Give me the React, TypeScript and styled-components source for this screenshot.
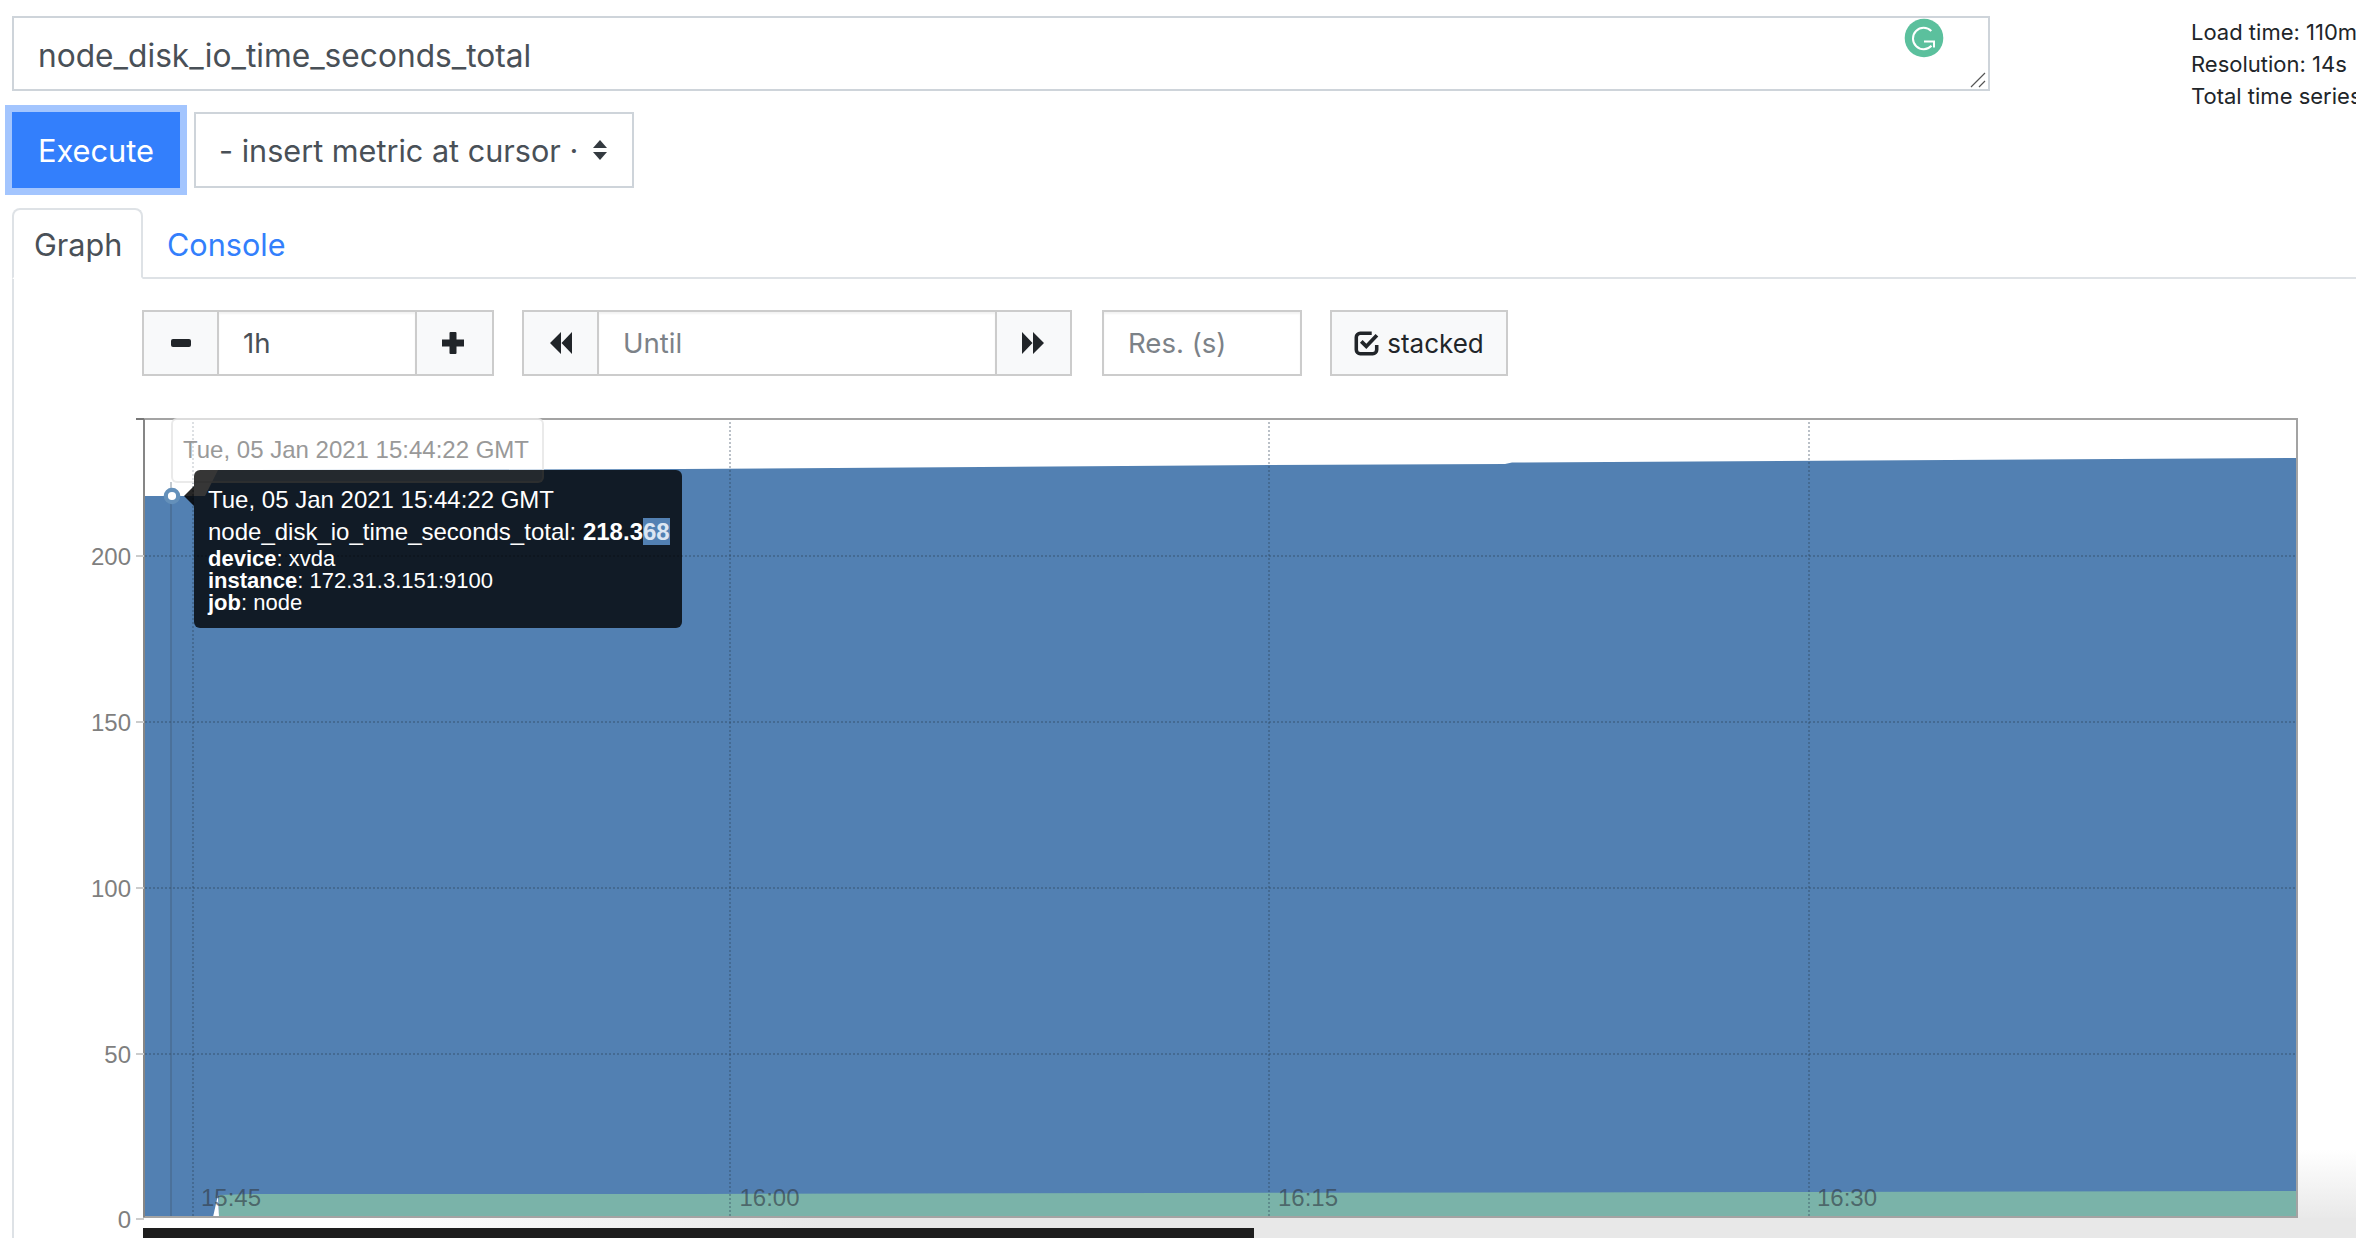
import styled, { createGlobalStyle } from 'styled-components'

const GlobalStyle = createGlobalStyle`
  html, body {
    margin: 0;
    padding: 0;
    background: #fff;
    overflow: hidden;
  }
  * {
    box-sizing: border-box;
  }
`

const sans = `Inter, "Liberation Sans", sans-serif`
const arial = `"Liberation Sans", Arial, sans-serif`

const Page = styled.div`
  position: relative;
  width: 2356px;
  height: 1238px;
  overflow: hidden;
  padding-top: 16px;
  font-family: ${sans};
  color: #212529;
`

const TopRow = styled.div`
  display: flex;
  padding-left: 12px;
`

const QueryColumn = styled.div`
  width: 1978px;
  flex: none;
`

const ExpressionWrap = styled.div`
  position: relative;
  height: 75px;
`

const Expression = styled.textarea`
  display: block;
  width: 100%;
  height: 100%;
  border: 2px solid #ced4da;
  padding: 19px 24px 0;
  font-family: ${sans};
  font-size: 31.7px;
  line-height: 38px;
  color: #495057;
  resize: none;
  outline: none;
  overflow: hidden;
`

const Grip = styled.svg`
  position: absolute;
  right: 4px;
  bottom: 3px;
  width: 16px;
  height: 16px;
`

const Grammarly = styled.svg`
  position: absolute;
  left: 1892px;
  top: 2px;
  width: 40px;
  height: 40px;
`

const Stats = styled.div`
  margin-left: 201px;
  font-size: 22px;
  line-height: 32px;
  white-space: nowrap;
`

const ActionRow = styled.div`
  display: flex;
  gap: 14px;
  margin-top: 21px;
`

const ExecuteButton = styled.button`
  width: 168px;
  height: 76px;
  border: none;
  background: #337ffc;
  color: #fff;
  font-family: ${sans};
  font-size: 30.8px;
  padding: 0;
  box-shadow: 0 0 0 7px rgba(51, 127, 252, 0.45);
`

const MetricSelect = styled.div`
  position: relative;
  width: 440px;
  height: 76px;
  border: 2px solid #ced4da;
  padding-left: 23px;
  display: flex;
  align-items: center;
  font-size: 30.6px;
  color: #495057;
  white-space: nowrap;
`

const SelectCaret = styled.svg`
  position: absolute;
  right: 24px;
  top: 26px;
  width: 16px;
  height: 20px;
`

const TabBar = styled.div`
  display: flex;
  align-items: flex-start;
  margin: 20px 0 0 12px;
  height: 71px;
  border-bottom: 2px solid #dee2e6;
`

const ActiveTab = styled.div`
  width: 131px;
  height: 71px;
  padding: 12px 0 0 20px;
  font-size: 30.6px;
  line-height: 46px;
  color: #495057;
  background: #fff;
  border: 2px solid #dee2e6;
  border-bottom-color: #fff;
  border-radius: 8px 8px 0 0;
`

const LinkTab = styled.div`
  padding: 14px 0 0 24px;
  font-size: 30.6px;
  line-height: 46px;
  color: #337ffc;
`

const Panel = styled.div`
  margin-left: 12px;
  height: 960px;
  padding-top: 31px;
  border-left: 2px solid #dee2e6;
`

const Controls = styled.div`
  display: flex;
  align-items: stretch;
  height: 66px;
  margin-left: 128px;
`

const Group = styled.div<{ $gap: number }>`
  display: flex;
  margin-right: ${({ $gap }) => $gap}px;
`

const AddonButton = styled.div<{ $width?: number; $first?: boolean; $shift?: number }>`
  width: ${({ $width }) => $width ?? 77}px;
  padding-right: ${({ $shift }) => $shift ?? 0}px;
  display: flex;
  align-items: center;
  justify-content: center;
  background: #f8f9fa;
  border: 2px solid #ccc;
  border-left-width: ${({ $first }) => ($first ? '2px' : '0')};
`

const ToolIcon = styled.svg`
  width: 24px;
  height: 24px;
  fill: #212529;
`

const FieldBox = styled.div<{ $width: number; $muted?: boolean; $alone?: boolean }>`
  width: ${({ $width }) => $width}px;
  display: flex;
  align-items: center;
  padding-left: 24px;
  border: 2px solid #ccc;
  border-left-width: ${({ $alone }) => ($alone ? '2px' : '0')};
  box-shadow: inset 0 2px 2px rgba(0, 0, 0, 0.05);
  background: #fff;
  font-size: 27.6px;
  color: ${({ $muted }) => ($muted ? '#7c8288' : '#495057')};
`

const StackedToggle = styled.div`
  width: 178px;
  display: flex;
  align-items: center;
  justify-content: center;
  gap: 8px;
  background: #f8f9fa;
  border: 2px solid #ccc;
  font-size: 26px;
  color: #212529;
`

const CheckIcon = styled.svg`
  width: 25px;
  height: 25px;
  fill: none;
  stroke: #212529;
`

const ChartWrap = styled.div`
  position: relative;
  margin-top: 34px;
  width: 2300px;
  height: 828px;
`

const ChartSvg = styled.svg`
  display: block;
  width: 2300px;
  height: 828px;
`

// wrapper starts at page x=14, y=410
const HoverDate = styled.div`
  position: absolute;
  left: 157px;
  top: 8px;
  width: 373px;
  height: 65px;
  padding: 16px 0 0 10px;
  background: rgba(255, 255, 255, 0.5);
  border: 2px solid rgba(225, 225, 225, 0.7);
  border-radius: 6px;
  font-family: ${arial};
  font-size: 24px;
  line-height: 28px;
  color: #999;
  white-space: nowrap;
`

const Tooltip = styled.div`
  position: absolute;
  left: 180px;
  top: 60px;
  width: 488px;
  height: 158px;
  padding: 16px 0 0 14px;
  background: rgba(0, 0, 0, 0.79);
  border-radius: 6px;
  font-family: ${arial};
  color: #fff;
  white-space: nowrap;

  &::before {
    content: '';
    position: absolute;
    left: -10px;
    top: 16px;
    border: 10px solid transparent;
    border-left: none;
    border-right-color: rgba(0, 0, 0, 0.85);
  }
`

const TooltipDate = styled.div`
  font-size: 24px;
  line-height: 28px;
`

const TooltipValue = styled.div`
  font-size: 24px;
  line-height: 28px;
  margin-top: 4px;
`

const Selected = styled.span`
  background: #5280b2;
  color: #dbe6f2;
`

const TooltipLabels = styled.div`
  font-size: 22px;
  line-height: 22px;
  margin-top: 2px;
`

const ScrollFade = styled.div`
  position: absolute;
  left: 0;
  right: 0;
  bottom: 0;
  height: 20px;
  background: linear-gradient(to right, rgba(232, 232, 232, 0) 350px, #e8e8e8 820px);
`

const SideFade = styled.div`
  position: absolute;
  right: 0;
  bottom: 20px;
  width: 58px;
  height: 68px;
  background: linear-gradient(to bottom, #fff, #e9e9e9);
`

const ScrollThumb = styled.div`
  position: absolute;
  left: 143px;
  bottom: 0;
  width: 1111px;
  height: 10px;
  background: #1e1e1e;
`

const blue = '#5280b2'
const green = '#7ab3a9'
const dots = 'rgba(40,60,80,0.32)'
const xGrid = [193, 730, 1269, 1809]
const yGrid = [556, 722, 888, 1054]
const yTicks = [
  { y: 556, label: '200' },
  { y: 722, label: '150' },
  { y: 888, label: '100' },
  { y: 1054, label: '50' },
  { y: 1219, label: '0' },
]
const xLabels = [
  { x: 201, label: '15:45' },
  { x: 739.5, label: '16:00' },
  { x: 1278, label: '16:15' },
  { x: 1817, label: '16:30' },
]

function Chart() {
  return (
    <ChartSvg viewBox="14 410 2300 828">
      <path
        d="M143 496 L205 496 L218 470 L682 469 L1270 465 L1505 464 L1512 462.5 L2297 458 L2297 1217 L143 1217 Z"
        fill={blue}
      />
      <path
        d="M219 1195 L250 1194 L700 1194 L1165 1193 L1809 1192 L2297 1191 L2297 1217 L219 1217 Z"
        fill={green}
      />
      <path d="M218 1195 L213 1217 L219 1217 Z" fill="#fff" />
      {xGrid.map((x) => (
        <line key={x} x1={x} x2={x} y1={418} y2={1217} stroke={dots} strokeWidth={2} strokeDasharray="2 2" />
      ))}
      {yGrid.map((y) => (
        <line key={y} x1={145} x2={2296} y1={y} y2={y} stroke={dots} strokeWidth={2} strokeDasharray="2 2" />
      ))}
      <line x1={171} x2={171} y1={482} y2={1217} stroke="rgba(60,80,100,0.3)" strokeWidth={2} />
      <path d="M144 419 H2297 V1217 H144 Z" fill="none" stroke="#a3a3a3" strokeWidth={2} />
      <path d="M144 419 V1217" fill="none" stroke="#868686" strokeWidth={2} />
      <line x1={136} x2={144} y1={419} y2={419} stroke="#777" strokeWidth={2} />
      {yTicks.map((t) => (
        <g key={t.label}>
          <line x1={136} x2={144} y1={t.y} y2={t.y} stroke="#ccc" strokeWidth={2} />
          <text x={131} y={t.y + 9} textAnchor="end" fontFamily={arial} fontSize={24} fill="#7f7f7f">
            {t.label}
          </text>
        </g>
      ))}
      {xLabels.map((t) => (
        <text key={t.label} x={t.x} y={1206} fontFamily={arial} fontSize={24} fill="rgba(50,60,70,0.65)">
          {t.label}
        </text>
      ))}
      <circle cx={172} cy={496} r={6.2} fill="#fff" stroke="#6490ba" strokeWidth={4.2} />
    </ChartSvg>
  )
}

export default function App() {
  return (
    <Page>
      <GlobalStyle />
      <TopRow>
        <QueryColumn>
          <ExpressionWrap>
            <Expression readOnly value="node_disk_io_time_seconds_total" />
            <Grammarly viewBox="0 0 40 40">
              <circle cx="20" cy="20" r="19.3" fill="#5bc09d" />
              <path
                d="M27.3 13 A10.7 10.7 0 1 0 27.5 27.8 M20 23.5 H30 V29.5"
                fill="none"
                stroke="#fff"
                strokeWidth="2"
              />
            </Grammarly>
            <Grip viewBox="0 0 16 16">
              <path d="M1 15 L15 1 M9 15 L15 9" stroke="#555" strokeWidth="1.2" />
            </Grip>
          </ExpressionWrap>
          <ActionRow>
            <ExecuteButton>Execute</ExecuteButton>
            <MetricSelect>
              - insert metric at cursor ·
              <SelectCaret viewBox="0 0 16 20">
                <path d="M8 0 L15 8 H1 Z M8 20 L1 12 H15 Z" fill="#343a40" />
              </SelectCaret>
            </MetricSelect>
          </ActionRow>
        </QueryColumn>
        <Stats>
          <div>Load time: 110ms</div>
          <div>Resolution: 14s</div>
          <div>Total time series: 2</div>
        </Stats>
      </TopRow>
      <TabBar>
        <ActiveTab>Graph</ActiveTab>
        <LinkTab>Console</LinkTab>
      </TabBar>
      <Panel>
        <Controls>
          <Group $gap={28}>
            <AddonButton $first>
              <ToolIcon viewBox="0 0 24 24">
                <rect x="2" y="8" width="20" height="8" rx="2" />
              </ToolIcon>
            </AddonButton>
            <FieldBox $width={198}>1h</FieldBox>
            <AddonButton $shift={3}>
              <ToolIcon viewBox="0 0 24 24">
                <path d="M9.5 1 H14.5 Q15.5 1 15.5 2 V8.5 H23 V15.5 H15.5 V22 Q15.5 23 14.5 23 H9.5 Q8.5 23 8.5 22 V15.5 H1 V8.5 H8.5 V2 Q8.5 1 9.5 1 Z" />
              </ToolIcon>
            </AddonButton>
          </Group>
          <Group $gap={30}>
            <AddonButton $first>
              <ToolIcon viewBox="0 0 24 24">
                <path d="M1 12 L12 1 V23 Z M12.5 12 L23 1 V23 Z" />
              </ToolIcon>
            </AddonButton>
            <FieldBox $width={398} $muted>
              Until
            </FieldBox>
            <AddonButton $width={75} $shift={2}>
              <ToolIcon viewBox="0 0 24 24">
                <path d="M23 12 L12 1 V23 Z M11.5 12 L1 1 V23 Z" />
              </ToolIcon>
            </AddonButton>
          </Group>
          <Group $gap={28}>
            <FieldBox $width={200} $muted $alone>
              Res. (s)
            </FieldBox>
          </Group>
          <StackedToggle>
            <CheckIcon viewBox="0 0 24 24">
              <path
                d="M17 2.2 H6 a3.8 3.8 0 0 0 -3.8 3.8 V18 a3.8 3.8 0 0 0 3.8 3.8 H18 a3.8 3.8 0 0 0 3.8 -3.8 V13.5"
                strokeWidth="3.4"
              />
              <path d="M7 10 L11.8 14.8 L22 4" strokeWidth="3.6" />
            </CheckIcon>
            stacked
          </StackedToggle>
        </Controls>
        <ChartWrap>
          <Chart />
          <HoverDate>Tue, 05 Jan 2021 15:44:22 GMT</HoverDate>
          <Tooltip>
            <TooltipDate>Tue, 05 Jan 2021 15:44:22 GMT</TooltipDate>
            <TooltipValue>
              node_disk_io_time_seconds_total: <b>218.3<Selected>68</Selected></b>
            </TooltipValue>
            <TooltipLabels>
              <div>
                <b>device</b>: xvda
              </div>
              <div>
                <b>instance</b>: 172.31.3.151:9100
              </div>
              <div>
                <b>job</b>: node
              </div>
            </TooltipLabels>
          </Tooltip>
        </ChartWrap>
      </Panel>
      <ScrollFade />
      <SideFade />
      <ScrollThumb />
    </Page>
  )
}
